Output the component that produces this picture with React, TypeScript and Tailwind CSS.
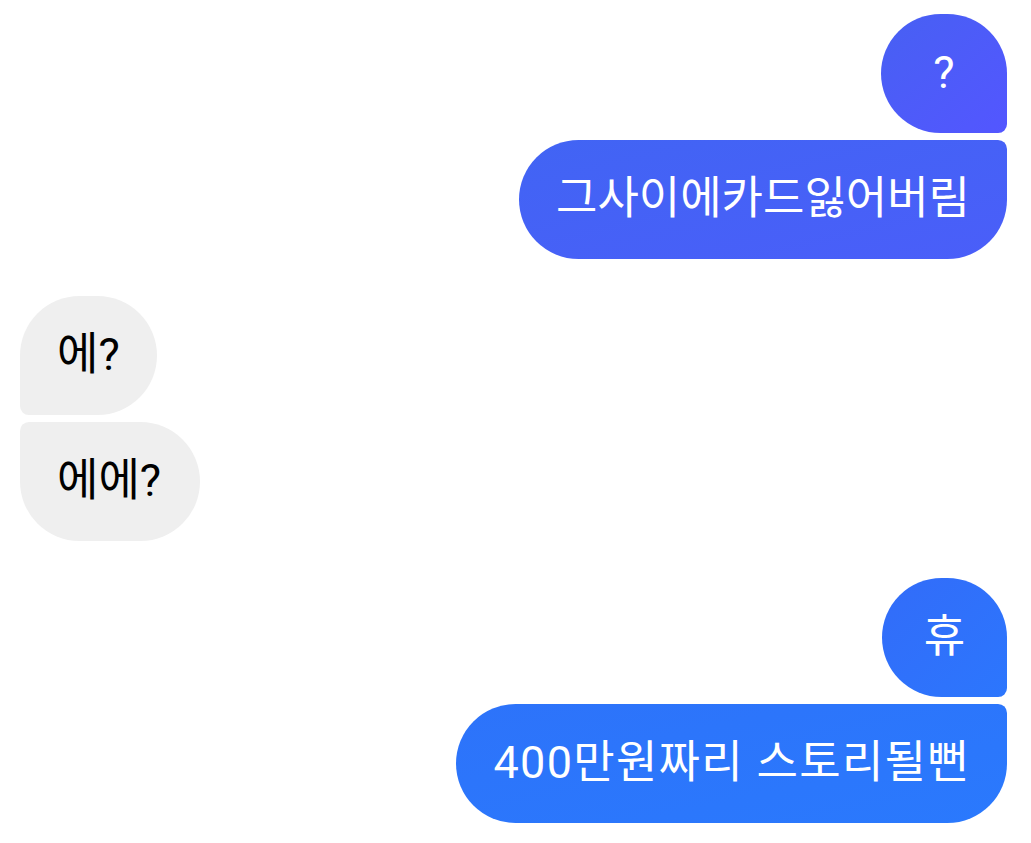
import React from 'react';

const font = { fontFamily: 'Roboto, "Noto Sans CJK KR", "Noto Sans", sans-serif' };

const Bubble = ({ text, className }: { text: string; className: string }) => (
  <div className={`h-[119px] flex items-center px-[37px] text-[45px] leading-none ${className}`}>
    <span className="-mt-[2px]">{text}</span>
  </div>
);

export default function App() {
  return (
    <div className="w-[1031px] h-[843px] bg-white flex flex-col pt-[14px] px-[20px] pr-[24px]" style={font}>
      <div className="flex flex-col items-end gap-[7px]">
        <Bubble
          text="?"
          className="text-white rounded-[60px] rounded-br-[9px] bg-gradient-to-br from-[#4760f3] to-[#5356ff] justify-center w-[126px] px-0"
        />
        <Bubble
          text="그사이에카드잃어버림"
          className="text-white rounded-[60px] rounded-tr-[9px] bg-gradient-to-br from-[#4164f4] to-[#4a5ef9]"
        />
      </div>

      <div className="flex flex-col items-start gap-[7px] mt-[37px]">
        <Bubble text="에?" className="text-black bg-[#efefef] rounded-[60px] rounded-bl-[9px]" />
        <Bubble text="에에?" className="text-black bg-[#efefef] rounded-[60px] rounded-tl-[9px] pr-[39px]" />
      </div>

      <div className="flex flex-col items-end gap-[7px] mt-[37px]">
        <Bubble
          text="휴"
          className="text-white rounded-[60px] rounded-br-[9px] bg-gradient-to-br from-[#326cf9] to-[#2c76fd] justify-center w-[125px] px-0"
        />
        <Bubble
          text="400만원짜리 스토리될뻔"
          className="text-white rounded-[60px] rounded-tr-[9px] bg-gradient-to-br from-[#2d73fa] to-[#2a79fd] tracking-[1.3px]"
        />
      </div>
    </div>
  );
}
